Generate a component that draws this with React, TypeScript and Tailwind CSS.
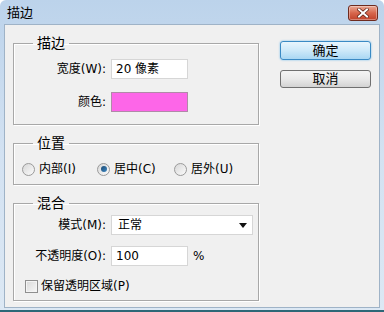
import React from "react";

const font = { fontFamily: '"DejaVu Sans", "Noto Sans CJK SC", sans-serif' };

function Radio({ checked, label }: { checked?: boolean; label: string }) {
  return (
    <label className="flex items-center gap-[4px]">
      <span className="flex h-[13px] w-[13px] items-center justify-center rounded-full border border-[#9a9a9a] bg-gradient-to-br from-[#d8d8d8] to-[#fbfbfb]">
        {checked && (
          <span className="h-[6px] w-[6px] rounded-full bg-gradient-to-br from-[#1e4b73] to-[#3d88c4]" />
        )}
      </span>
      <span>{label}</span>
    </label>
  );
}

function Group({ title, className, children }: { title: string; className?: string; children: React.ReactNode }) {
  return (
    <fieldset className={`border border-[#a8a8a8] shadow-[inset_1px_1px_0_#ffffff,1px_1px_0_#ffffff] ${className ?? ""}`}>
      <legend className="ml-[19px] px-[4px] text-[14px] leading-[16px]">{title}</legend>
      {children}
    </fieldset>
  );
}

export default function App() {
  return (
    <div
      className="flex h-[312px] w-[384px] flex-col overflow-hidden rounded-t-[6px] border-b-2 border-[#2d6777] bg-gradient-to-b from-[#bcd3eb] via-[#d3e2f2] to-[#dce8f4] text-[12px] text-black"
      style={font}
    >
      {/* Title bar */}
      <div className="flex h-[24px] shrink-0 items-center justify-between pl-[7px] pr-[6px]">
        <span className="text-[13px] leading-none">描边</span>
        <button className="mt-[2px] flex h-[16px] w-[30px] items-center justify-center rounded-[3px] border border-[#6e2b1f] bg-gradient-to-b from-[#e9a895] via-[#d7664c] to-[#c0412a] shadow-[inset_0_0_0_1px_rgba(255,255,255,0.35)]">
          <svg width="12" height="10" viewBox="0 0 12 10">
            <path d="M2 1.5 L10 8.5 M10 1.5 L2 8.5" stroke="#5a1d12" strokeWidth="3.4" strokeLinecap="square" />
            <path d="M2 1.5 L10 8.5 M10 1.5 L2 8.5" stroke="#ffffff" strokeWidth="2" strokeLinecap="square" />
          </svg>
        </button>
      </div>

      {/* Client area */}
      <div className="mx-[4px] mb-[2px] flex flex-1 gap-[21px] border border-[#9fb3c7] bg-[#f0f0f0] pl-[8px]">
        <div className="w-[246px]">
          <Group title="描边" className="mt-[10px] pb-[12px]">
            <div className="mt-[8px] flex items-center">
              <span className="w-[97px] pr-[5px] text-right">宽度(W):</span>
              <div className="flex h-[20px] w-[77px] items-center border border-[#d6d6d6] bg-white pl-[4px]">20 像素</div>
            </div>
            <div className="mt-[13px] flex items-center">
              <span className="w-[97px] pr-[5px] text-right">颜色:</span>
              <div className="h-[20px] w-[77px] border border-[#b08aa8] bg-[#fd66e8]" />
            </div>
          </Group>

          <Group title="位置" className="mt-[10px] pb-[7px]">
            <div className="mt-[10px] flex h-[16px] items-center pl-[8px]">
              <div className="w-[75px]">
                <Radio label="内部(I)" />
              </div>
              <div className="w-[77px]">
                <Radio checked label="居中(C)" />
              </div>
              <Radio label="居外(U)" />
            </div>
          </Group>

          <Group title="混合" className="mt-[10px] pb-[5px]">
            <div className="mt-[4px] flex items-center">
              <span className="w-[97px] pr-[5px] text-right">模式(M):</span>
              <div className="flex h-[20px] w-[142px] items-center justify-between border border-[#d6d6d6] bg-white pl-[6px] pr-[5px]">
                <span>正常</span>
                <svg width="8" height="5" viewBox="0 0 8 5">
                  <path d="M0 0 H8 L4 5 Z" fill="#111" />
                </svg>
              </div>
            </div>
            <div className="mt-[11px] flex items-center">
              <span className="w-[97px] pr-[5px] text-right">不透明度(O):</span>
              <div className="flex h-[20px] w-[77px] items-center border border-[#d6d6d6] bg-white pl-[4px]">100</div>
              <span className="ml-[5px]">%</span>
            </div>
            <label className="mt-[11px] flex items-center gap-[3px] pl-[11px]">
              <span className="h-[13px] w-[13px] border border-[#8f8f8f] bg-gradient-to-br from-[#d9d9d9] to-[#f8f8f8] shadow-[inset_0_0_0_1px_#f4f4f4]" />
              <span>保留透明区域(P)</span>
            </label>
          </Group>
        </div>

        <div className="flex flex-col pt-[16px]">
          <button className="flex h-[19px] w-[91px] items-center justify-center rounded-[3px] border border-[#3a8ac4] bg-gradient-to-b from-[#e8f5fd] via-[#cde9f9] to-[#a9d7f3] text-[13px] shadow-[0_0_2px_#65b6ec]">
            确定
          </button>
          <button className="mt-[10px] flex h-[18px] w-[91px] items-center justify-center rounded-[3px] border border-[#707070] bg-gradient-to-b from-[#f4f4f4] via-[#e9e9e9] to-[#d3d3d3] text-[13px]">
            取消
          </button>
        </div>
      </div>
    </div>
  );
}
